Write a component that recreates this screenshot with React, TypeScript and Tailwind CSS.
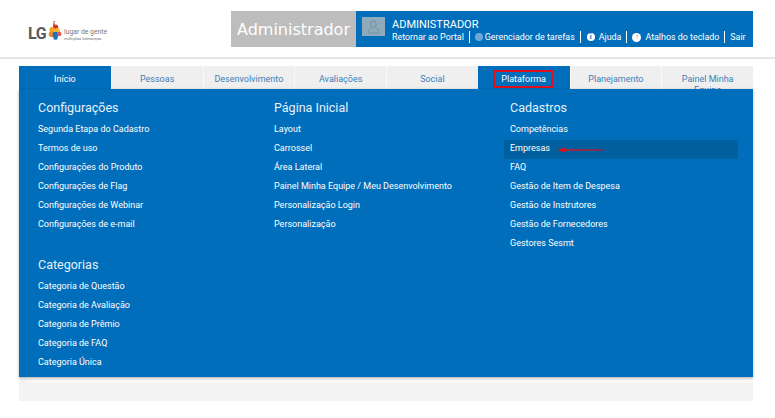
import React from "react";

const font = { fontFamily: "Roboto, sans-serif" };

function Logo() {
  return (
    <div className="flex items-center ml-[28px] mt-[20px] h-[24px]">
      <span className="text-[16px] font-bold text-[#5a5a5a] leading-none tracking-[-0.5px] mt-[3px]">LG</span>
      <svg width="15" height="22" viewBox="0 0 18 25" className="mt-[-2px] ml-[2px]">
        <circle cx="7.5" cy="1.5" r="1" fill="#c0392b" />
        <rect x="6" y="3" width="2" height="3" fill="#d9534f" />
        <circle cx="9" cy="8" r="3.2" fill="#d9301f" />
        <circle cx="5" cy="11" r="3.4" fill="#f5a623" />
        <circle cx="11" cy="12" r="3.2" fill="#f7b731" />
        <circle cx="4.5" cy="16.5" r="3.6" fill="#f08a24" />
        <circle cx="9" cy="17" r="3.6" fill="#1f6fc0" />
        <circle cx="13.5" cy="16" r="2.6" fill="#e0574f" />
        <circle cx="9" cy="20.5" r="2.6" fill="#1f6fc0" />
      </svg>
      <div className="flex flex-col ml-[1px] mt-[5px]">
        <span className="text-[6.8px] leading-[8px] text-[#777] whitespace-nowrap">lugar de gente</span>
        <span className="text-[4.2px] leading-[6px] text-[#777] whitespace-nowrap">múltiplas lideranças</span>
      </div>
    </div>
  );
}

function Sep() {
  return <span className="w-px h-[12px] bg-white mx-[5px] shrink-0" />;
}

function Header() {
  return (
    <div className="h-[59px] border-b-2 border-[#e6e6e6] flex items-start box-border">
      <div className="w-[231px]"><Logo /></div>
      <div className="mt-[11px] h-[36px] flex">
        <div className="w-[125px] bg-[#bdbdbd] text-white flex items-center justify-center pt-[1px]">
          <span className="text-[16px]" style={{ fontFamily: "'DejaVu Sans', sans-serif" }}>Administrador</span>
        </div>
        <div className="w-[397px] bg-[#006ebb] flex items-start text-white pl-[6px] pt-[6px]">
          <div className="w-[23px] h-[19px] bg-[#8fabbb] flex items-center justify-center mr-[7px] shrink-0">
            <svg width="13" height="14" viewBox="0 0 15 16" fill="none" stroke="#6e8c9e" strokeWidth="1">
              <ellipse cx="7.5" cy="5" rx="3.2" ry="4" />
              <path d="M1.5 15v-2c0-2 2-3 3.5-3.5M13.5 15v-2c0-2-2-3-3.5-3.5M1.5 15h12" />
            </svg>
          </div>
          <div className="flex flex-col pt-[1px]">
            <span className="text-[11px] leading-[13px]">ADMINISTRADOR</span>
            <div className="flex items-center text-[8.9px] leading-[12px] whitespace-nowrap">
              <span>Retornar ao Portal</span>
              <Sep />
              <span className="w-[8px] h-[8px] rounded-full bg-[#6fa8d6] mr-[2px]" />
              <span>Gerenciador de tarefas</span>
              <Sep />
              <span className="w-[8px] h-[8px] rounded-full bg-white ml-[1px] mr-[4px] flex items-center justify-center text-[#006ebb] text-[7px] font-bold leading-none">i</span>
              <span>Ajuda</span>
              <Sep />
              <span className="w-[9px] h-[9px] rounded-full bg-white mr-[4px] flex items-center justify-center text-[#006ebb] text-[7px] font-bold leading-none">↑</span>
              <span>Atalhos do teclado</span>
              <Sep />
              <span>Sair</span>
            </div>
          </div>
        </div>
      </div>
    </div>
  );
}

const tabs = ["Início", "Pessoas", "Desenvolvimento", "Avaliações", "Social", "Plataforma", "Planejamento", "Painel Minha Equipe"];

function Tabs() {
  return (
    <div className="grid grid-cols-8 h-[23px] overflow-hidden">
      {tabs.map((t, i) => {
        const active = i === 0 || i === 5;
        return (
          <div
            key={t}
            className={
              "relative h-[23px] text-center text-[9px] pt-[8px] leading-[11px] px-[10px] " +
              (active ? "bg-[#006ebb] text-white" : "bg-[#efefef] text-[#3d7fb8] border-l border-[#fafafa]")
            }
          >
            {t}
            {i === 5 && (
              <span className="absolute left-[15px] top-[4px] w-[60px] h-[18px] border-2 border-[#e0101c]" />
            )}
          </div>
        );
      })}
    </div>
  );
}

function Item({ children, hl }: { children: React.ReactNode; hl?: boolean }) {
  return (
    <li
      className={
        "relative h-[19px] flex items-center text-[9px] text-white whitespace-nowrap " +
        (hl ? "bg-[#005f9f] -ml-[6px] pl-[6px]" : "")
      }
    >
      {children}
      {hl && (
        <svg width="47" height="6" viewBox="0 0 48 6" className="absolute left-[53px] top-[7px]">
          <path d="M0 3 L8 0.5 L8 2.2 L48 2.4 L48 3.6 L8 3.8 L8 5.5 Z" fill="#e0101c" />
        </svg>
      )}
    </li>
  );
}

function Group({ title, items, hl, className = "" }: { title: string; items: string[]; hl?: string; className?: string }) {
  return (
    <div className={className}>
      <h3 className="text-[12.5px] leading-[16px] text-[#e6f1f9] font-normal mb-[4.5px]">{title}</h3>
      <ul>
        {items.map((t) => (
          <Item key={t} hl={t === hl}>{t}</Item>
        ))}
      </ul>
    </div>
  );
}

export default function App() {
  return (
    <div className="w-[775px] h-[418px] bg-white overflow-hidden" style={font}>
      <Header />
      <div className="ml-[19px] mr-[22px] mt-[7px] h-[335px] bg-[#f3f3f3]">
        <Tabs />
        <div className="relative bg-[#006ebb] h-[288px] shadow-[0_1px_3px_rgba(0,0,0,0.3)] flex pt-[11px] pl-[19px] pr-[15px]">
          <div className="w-[236px]">
            <Group
              title="Configurações"
              items={["Segunda Etapa do Cadastro", "Termos de uso", "Configurações do Produto", "Configurações de Flag", "Configurações de Webinar", "Configurações de e-mail"]}
            />
            <Group
              className="mt-[22px]"
              title="Categorias"
              items={["Categoria de Questão", "Categoria de Avaliação", "Categoria de Prêmio", "Categoria de FAQ", "Categoria Única"]}
            />
          </div>
          <div className="w-[236px]">
            <Group
              title="Página Inicial"
              items={["Layout", "Carrossel", "Área Lateral", "Painel Minha Equipe / Meu Desenvolvimento", "Personalização Login", "Personalização"]}
            />
          </div>
          <div className="flex-1">
            <Group
              title="Cadastros"
              hl="Empresas"
              items={["Competências", "Empresas", "FAQ", "Gestão de Item de Despesa", "Gestão de Instrutores", "Gestão de Fornecedores", "Gestores Sesmt"]}
            />
          </div>
        </div>
        <div className="ml-[7px] h-[6px] bg-[#f8f8f8]" />
      </div>
    </div>
  );
}
